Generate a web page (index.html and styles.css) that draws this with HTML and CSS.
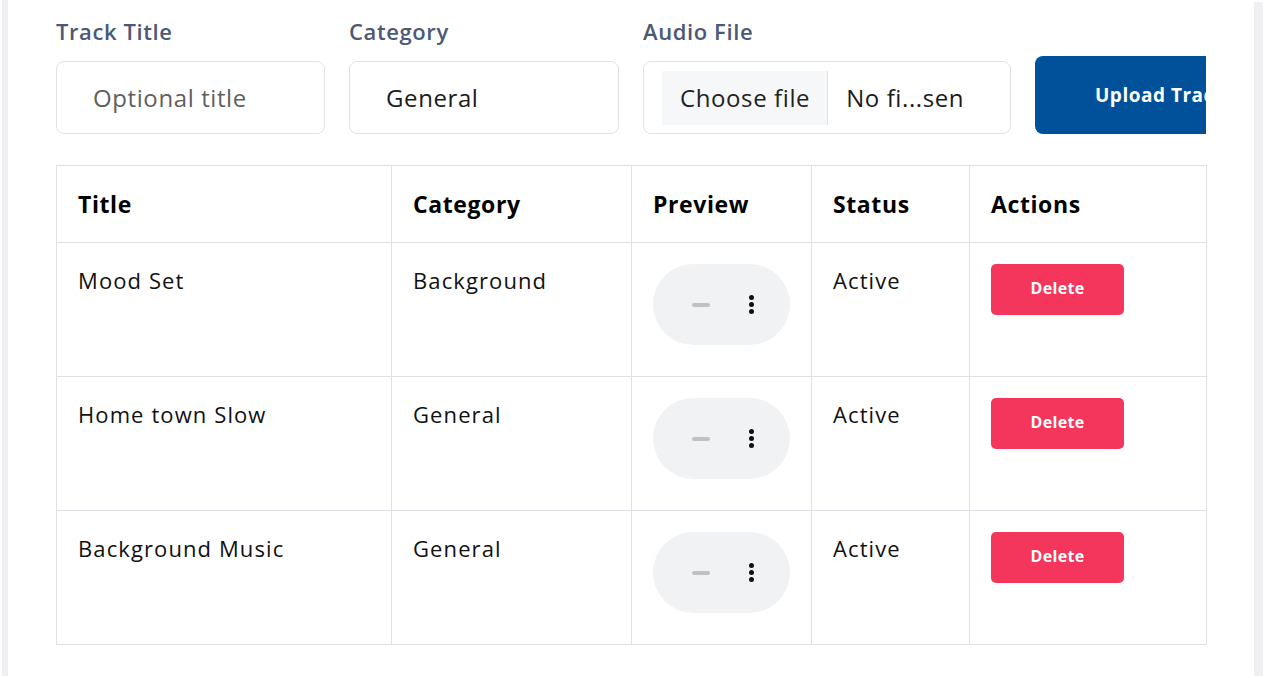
FILE: index.html
```html
<!DOCTYPE html>
<html lang="en">
<head>
<meta charset="utf-8">
<title>Tracks</title>
<link rel="stylesheet" href="styles.css">
</head>
<body>
<div class="frame">
  <div class="edge edge-left"></div>
  <main class="panel">
    <form class="upload-form">
      <div class="field field-title">
        <label class="field-label">Track Title</label>
        <div class="input"><span class="placeholder">Optional title</span></div>
      </div>
      <div class="field field-category">
        <label class="field-label">Category</label>
        <div class="input"><span class="value">General</span></div>
      </div>
      <div class="field field-file">
        <label class="field-label">Audio File</label>
        <div class="input file-input">
          <span class="file-btn">Choose file</span>
          <span class="file-name">No fi...sen</span>
        </div>
      </div>
      <button type="button" class="upload-btn">Upload Track</button>
    </form>

    <table class="tracks">
      <colgroup>
        <col class="c-title"><col class="c-cat"><col class="c-prev"><col class="c-status"><col class="c-actions">
      </colgroup>
      <thead>
        <tr><th>Title</th><th>Category</th><th>Preview</th><th>Status</th><th>Actions</th></tr>
      </thead>
      <tbody>
        <tr>
          <td>Mood Set</td><td>Background</td>
          <td><div class="player"><span class="dash"></span><span class="dots"><i></i><i></i><i></i></span></div></td>
          <td>Active</td>
          <td><button type="button" class="delete-btn">Delete</button></td>
        </tr>
        <tr>
          <td>Home town Slow</td><td>General</td>
          <td><div class="player"><span class="dash"></span><span class="dots"><i></i><i></i><i></i></span></div></td>
          <td>Active</td>
          <td><button type="button" class="delete-btn">Delete</button></td>
        </tr>
        <tr>
          <td>Background Music</td><td>General</td>
          <td><div class="player"><span class="dash"></span><span class="dots"><i></i><i></i><i></i></span></div></td>
          <td>Active</td>
          <td><button type="button" class="delete-btn">Delete</button></td>
        </tr>
      </tbody>
    </table>
  </main>
  <div class="edge edge-right"></div>
</div>
</body>
</html>
```
FILE: styles.css
```css
* { box-sizing: border-box; }
html, body { margin: 0; padding: 0; background: #ffffff; }
body {
  font-family: "Open Sans", "Noto Sans", sans-serif;
  color: #111;
  width: 1265px;
  height: 678px;
  overflow: hidden;
}
.frame {
  display: flex;
  height: 676px;
}
.edge {
  background: #efeff4;
  flex: 0 0 auto;
}
.edge-left { width: 6px; margin-left: 2px; }
.edge-right { width: 9px; margin-top: 2px; margin-right: 2px; }
.panel {
  flex: 1 1 auto;
  padding: 16px 48px 0 48px;
  overflow: hidden;
  min-width: 0;
}
.upload-form {
  display: flex;
  align-items: flex-end;
  gap: 24px;
  width: 1150px;
  overflow: hidden;
}
.field { display: flex; flex-direction: column; flex: 0 0 auto; }
.field-title { width: 269px; }
.field-category { width: 270px; }
.field-file { width: 368px; }
.field-label {
  font-size: 22px;
  font-weight: 600;
  letter-spacing: 0.6px;
  color: #4b5876;
  line-height: 30px;
  margin-bottom: 15px;
}
.input {
  height: 73px;
  border: 1px solid #e1e2e8;
  border-radius: 8px;
  display: flex;
  align-items: center;
  padding: 0 36px;
  font-size: 24px;
  letter-spacing: 0.6px;
}
.placeholder { color: #5f5f5f; }
.value { color: #1a1a1a; }
.file-input { padding: 0 18px; }
.file-btn {
  background: #f6f7f9;
  border-right: 1px solid #e1e2e8;
  height: 54px;
  display: flex;
  align-items: center;
  padding: 0 17px 0 18px;
  color: #222;
}
.file-name { padding-left: 18px; color: #1a1a1a; }
.upload-btn {
  flex: 0 0 auto;
  height: 78px;
  background: #00509a;
  color: #fff;
  border: none;
  border-radius: 8px;
  font-family: inherit;
  font-size: 19px;
  font-weight: 700;
  letter-spacing: 0.5px;
  padding: 0 60px;
  white-space: nowrap;
}
.tracks {
  margin-top: 31px;
  width: 1150px;
  border-collapse: collapse;
  table-layout: fixed;
  font-size: 22px;
  letter-spacing: 1.1px;
}
.c-title { width: 335px; }
.c-cat { width: 240px; }
.c-prev { width: 180px; }
.c-status { width: 158px; }
.c-actions { width: 237px; }
.tracks th, .tracks td {
  border: 1px solid #dfdfe6;
  text-align: left;
  padding: 21px 21px 31px;
  vertical-align: top;
  line-height: 32px;
  color: #111;
}
.tracks th {
  font-size: 23px;
  font-weight: 700;
  letter-spacing: 0.6px;
  padding: 0 21px;
  height: 77px;
  vertical-align: middle;
  color: #000;
}
.player {
  width: 137px;
  height: 81px;
  border-radius: 41px;
  background: #f1f2f4;
  display: flex;
  align-items: center;
  padding-left: 39px;
}
.dash {
  width: 18px;
  height: 4px;
  border-radius: 2px;
  background: #c1c1c1;
}
.dots {
  margin-left: 39px;
  display: flex;
  flex-direction: column;
  gap: 2px;
}
.dots i {
  display: block;
  width: 5px;
  height: 5px;
  border-radius: 50%;
  background: #111;
}
.delete-btn {
  display: block;
  width: 133px;
  height: 51px;
  background: #f5365c;
  color: #fff;
  border: none;
  border-radius: 5px;
  font-family: inherit;
  font-size: 16px;
  font-weight: 700;
  letter-spacing: 0.3px;
  padding-bottom: 4px;
}
```
